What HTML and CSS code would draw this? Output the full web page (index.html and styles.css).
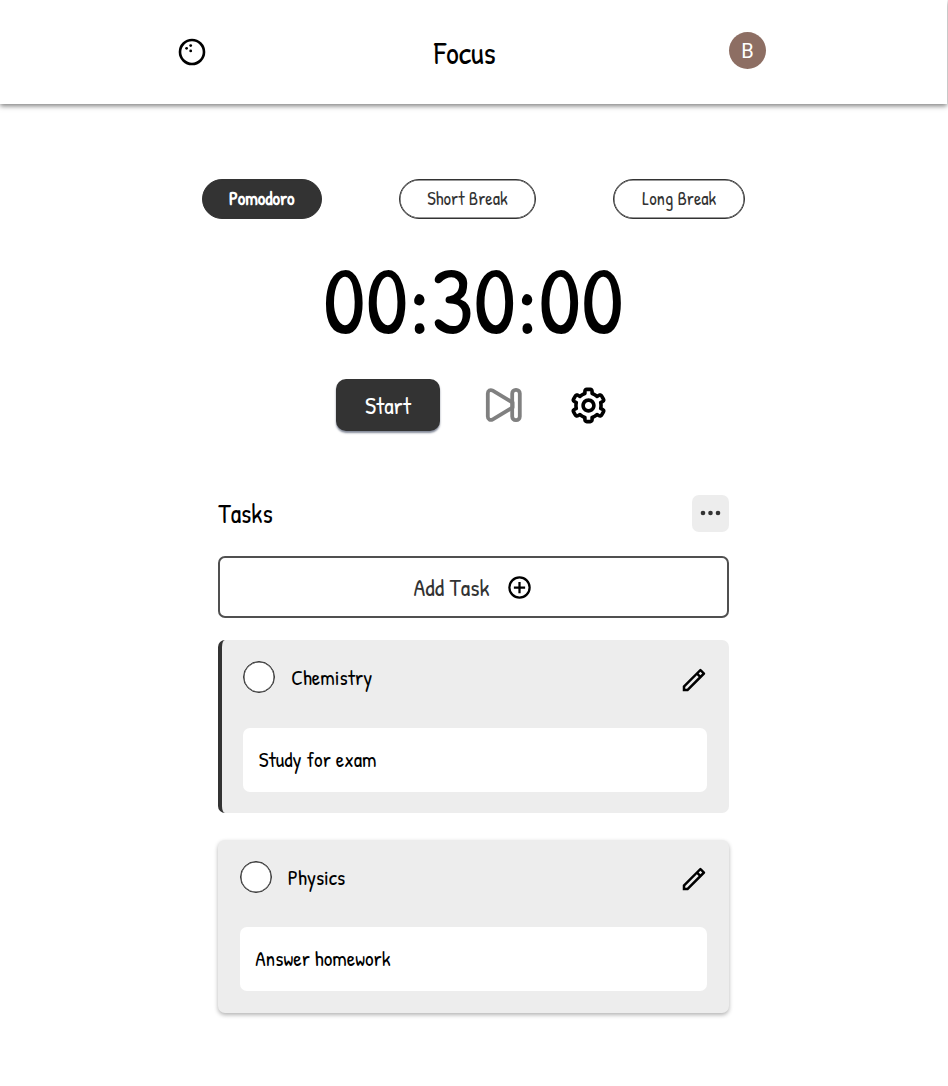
FILE: index.html
```html
<!DOCTYPE html>
<html lang="en">
<head>
<meta charset="utf-8">
<title>Focus</title>
<link rel="stylesheet" href="styles.css">
</head>
<body>
<header class="header">
  <svg class="ball" viewBox="0 0 28 28"><circle cx="14" cy="14" r="12" fill="none" stroke="#000" stroke-width="2.6"/><circle cx="8.600" cy="10.300" r="1.4"/><circle cx="12.700" cy="7.600" r="1.4"/><circle cx="12.700" cy="12.900" r="1.4"/></svg>
  <h1 class="title">Focus</h1>
  <div class="avatar">B</div>
</header>
<main class="main">
  <nav class="modes">
    <button class="mode mode-active">Pomodoro</button>
    <button class="mode mode-short">Short Break</button>
    <button class="mode mode-long">Long Break</button>
  </nav>
  <div class="timer">00:30:00</div>
  <div class="controls">
    <button class="start">Start</button>
    <svg class="skip" viewBox="0 0 40 36"><path d="M3.8 6.5v23c0 3 2.5 4.3 5 2.8L28.6 20.500V15.500L8.800 3.700c-2.500-1.500-5-.2-5 2.800z"/><rect x="28.200" y="2.900" width="7.600" height="30.200" rx="3.600"/></svg>
    <svg class="gear" viewBox="0 0 24 24"><path d="M12 16c2.206 0 4-1.794 4-4s-1.794-4-4-4-4 1.794-4 4 1.794 4 4 4zm0-6c1.084 0 2 .916 2 2s-.916 2-2 2-2-.916-2-2 .916-2 2-2z"/><path d="m2.845 16.136 1 1.73c.531.917 1.809 1.261 2.73.73l.529-.306A8.1 8.1 0 0 0 9 19.402V20c0 1.103.897 2 2 2h2c1.103 0 2-.897 2-2v-.598a8.132 8.132 0 0 0 1.896-1.111l.529.306c.923.53 2.198.188 2.731-.731l.999-1.729a2.001 2.001 0 0 0-.731-2.732l-.505-.292a7.718 7.718 0 0 0 0-2.224l.505-.292a2.002 2.002 0 0 0 .731-2.732l-.999-1.729c-.531-.92-1.808-1.265-2.731-.732l-.529.306A8.1 8.1 0 0 0 15 4.598V4c0-1.103-.897-2-2-2h-2c-1.103 0-2 .897-2 2v.598a8.132 8.132 0 0 0-1.896 1.111l-.529-.306c-.924-.531-2.2-.187-2.731.732l-.999 1.729a2.001 2.001 0 0 0 .731 2.732l.505.292a7.683 7.683 0 0 0 0 2.223l-.505.292a2.003 2.003 0 0 0-.731 2.733zm3.326-2.758A5.703 5.703 0 0 1 6 12c0-.462.058-.926.17-1.378a.999.999 0 0 0-.47-1.108l-1.123-.65.998-1.729 1.145.662a.997.997 0 0 0 1.188-.142 6.071 6.071 0 0 1 2.384-1.399A1 1 0 0 0 11 5.3V4h2v1.3a1 1 0 0 0 .708.956 6.083 6.083 0 0 1 2.384 1.399.999.999 0 0 0 1.188.142l1.144-.661 1 1.729-1.124.649a1 1 0 0 0-.47 1.108c.112.452.17.916.17 1.378 0 .461-.058.925-.171 1.378a1 1 0 0 0 .471 1.108l1.123.649-.998 1.729-1.145-.661a.996.996 0 0 0-1.188.142 6.071 6.071 0 0 1-2.384 1.399A1 1 0 0 0 13 18.7l.002 1.3H11v-1.3a1 1 0 0 0-.708-.956 6.083 6.083 0 0 1-2.384-1.399.992.992 0 0 0-1.188-.141l-1.144.662-1-1.729 1.124-.651a1 1 0 0 0 .471-1.108z"/></svg>
  </div>
  <section class="tasks">
    <div class="tasks-head">
      <h2 class="tasks-title">Tasks</h2>
      <button class="more"><svg width="21" height="6"><circle cx="3" cy="3" r="2.300"/><circle cx="10.500" cy="3" r="2.300"/><circle cx="18" cy="3" r="2.300"/></svg></button>
    </div>
    <button class="add">
      <span class="add-label">Add Task</span>
      <svg class="plus" viewBox="0 0 24 24"><circle cx="12" cy="12" r="9"/><path d="M12 7v10M7 12h10"/></svg>
    </button>
    <article class="card card-current">
      <div class="card-head">
        <span class="check"></span>
        <span class="name">Chemistry</span>
        <svg class="pencil" viewBox="0 0 24 24"><path d="M15.728 9.686l-1.414-1.414L5 17.586V19h1.414l9.314-9.314zm1.414-1.414l1.414-1.414-1.414-1.414-1.414 1.414 1.414 1.414zM7.242 21H3v-4.243L16.435 3.322a1 1 0 0 1 1.414 0l2.829 2.829a1 1 0 0 1 0 1.414L7.243 21z"/></svg>
      </div>
      <div class="note">Study for exam</div>
    </article>
    <article class="card card-raised">
      <div class="card-head">
        <span class="check"></span>
        <span class="name">Physics</span>
        <svg class="pencil" viewBox="0 0 24 24"><path d="M15.728 9.686l-1.414-1.414L5 17.586V19h1.414l9.314-9.314zm1.414-1.414l1.414-1.414-1.414-1.414-1.414 1.414 1.414 1.414zM7.242 21H3v-4.243L16.435 3.322a1 1 0 0 1 1.414 0l2.829 2.829a1 1 0 0 1 0 1.414L7.243 21z"/></svg>
      </div>
      <div class="note">Answer homework</div>
    </article>
  </section>
</main>
</body>
</html>
```
FILE: styles.css
```css
* { box-sizing: border-box; }
body {
  margin: 0;
  height: 1086px;
  background: #fff;
  color: #000;
  font-family: "Patrick Hand", Lato, sans-serif;
  overflow: hidden;
}
h1, h2 { margin: 0; font-weight: 400; }
svg { display: block; flex: none; overflow: visible; }
button {
  display: flex;
  align-items: center;
  justify-content: center;
  padding: 0;
  border: 0;
  background: none;
  color: #333;
  font-family: inherit;
  white-space: nowrap;
}
.header {
  display: grid;
  grid-template-columns: 256px 295px 37px;
  width: 947px;
  height: 104px;
  padding: 32px 0 0 178px;
  box-shadow: 0 2px 5px rgba(0, 0, 0, .5);
}
.ball { width: 28px; height: 28px; margin-top: 6px; }
.title { font-size: 31.700px; line-height: 42px; }
.avatar {
  width: 37px;
  height: 37px;
  border-radius: 50%;
  background: #8d6e63;
  color: #fff;
  font: 20px/38px Roboto, sans-serif;
  text-align: center;
}
.main {
  display: flex;
  flex-direction: column;
  align-items: center;
  width: 947px;
  padding-top: 74.500px;
}
.modes { display: flex; gap: 77px; }
.mode {
  height: 40.500px;
  width: 120px;
  padding-bottom: 1px;
  border: 1px solid #333;
  border-radius: 21px;
  box-shadow: inset 0 0 0 .5px #333;
  font-size: 18.500px;
}
.mode-active { background: #333; color: #fff; font-weight: 700; }
.mode-short { width: 137.500px; }
.mode-long { width: 132px; }
.timer {
  height: 100px;
  margin-top: 30px;
  font-size: 95.500px;
  line-height: 100px;
}
.controls {
  display: flex;
  width: 275px;
  height: 52px;
  margin-top: 30px;
}
.start {
  width: 104px;
  height: 52px;
  border-radius: 10px;
  background: #333;
  box-shadow: 0 2px 2px rgba(50, 60, 85, .6);
  color: #fff;
  font-size: 24px;
}
.skip {
  width: 40px;
  height: 36px;
  margin: 8px 0 0 43.500px;
  fill: none;
  stroke: #808080;
  stroke-width: 3.800;
  stroke-linejoin: round;
}
.gear { width: 43px; height: 43px; margin: 4.500px 0 0 43.500px; }
.tasks { width: 510.500px; margin-top: 63.500px; }
.tasks-head { display: flex; justify-content: space-between; }
.tasks-title { font-size: 26.600px; line-height: 37px; }
.more {
  width: 37px;
  height: 37px;
  border-radius: 7px;
  background: #ededed;
  fill: #333;
}
.add {
  width: 100%;
  height: 62px;
  margin-top: 24.500px;
  gap: 17px;
  border: 2px solid #505050;
  border-radius: 7px;
  font-size: 24px;
}
.plus { width: 27px; height: 27px; fill: none; stroke: #000; stroke-width: 2; }
.card {
  height: 173px;
  padding: 21px 21.500px;
  border-radius: 7px;
  background: #ededed;
  font-size: 21.250px;
}
.card-current { margin-top: 22px; padding-left: 21px; border-left: 4px solid #333; }
.card-raised { margin-top: 26.500px; box-shadow: 0 2px 4px rgba(0, 0, 0, .3); }
.card-head { display: flex; height: 66.500px; }
.check {
  width: 32px;
  height: 32px;
  border: 1px solid #333;
  border-radius: 50%;
  background: #fff;
  box-shadow: inset 0 0 0 .5px #333;
}
.name { margin-left: 16px; line-height: 34px; }
.pencil { width: 30px; height: 30px; margin: 3.500px -1.500px 0 auto; }
.note {
  height: 64px;
  padding: 0 15.500px;
  border-radius: 7px;
  background: #fff;
  line-height: 64px;
}
```
